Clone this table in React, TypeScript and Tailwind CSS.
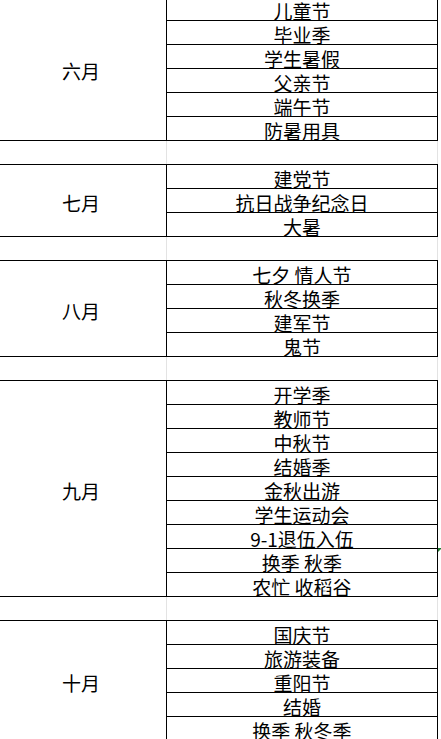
import React from 'react'

type Group = { month: string; items: string[] }

const groups: Group[] = [
  { month: '六月', items: ['儿童节', '毕业季', '学生暑假', '父亲节', '端午节', '防暑用具'] },
  { month: '七月', items: ['建党节', '抗日战争纪念日', '大暑'] },
  { month: '八月', items: ['七夕 情人节', '秋冬换季', '建军节', '鬼节'] },
  {
    month: '九月',
    items: ['开学季', '教师节', '中秋节', '结婚季', '金秋出游', '学生运动会', '9-1退伍入伍', '换季 秋季', '农忙 收稻谷'],
  },
  { month: '十月', items: ['国庆节', '旅游装备', '重阳节', '结婚', '换季 秋冬季'] },
]

const font = { fontFamily: '"Noto Sans CJK SC", "Noto Sans", sans-serif' }

function BlankRow() {
  return (
    <div className="flex h-[24px] border-b border-black">
      <div className="w-[166px]" />
      <div className="w-[272px] border-x border-[#e3e3e3]" />
    </div>
  )
}

function MonthGroup({ group }: { group: Group }) {
  return (
    <div className="flex">
      <div className="w-[166px] border-b border-black flex items-center justify-center pr-1 pt-[4px] text-[19px] leading-none text-black">
        {group.month}
      </div>
      <div className="w-[272px] border-x border-black">
        {group.items.map(item => (
          <div
            key={item}
            className="relative h-[24px] border-b border-black flex items-center justify-center pt-[4px] text-[19px] leading-none text-black"
          >
            {item}
            {item === '换季 秋季' && (
              <svg className="absolute -right-[5px] -top-[1px]" width="4" height="4" viewBox="0 0 4 4">
                <polygon points="0,0 4,0 0,4" fill="#1e7a2e" />
              </svg>
            )}
          </div>
        ))}
      </div>
    </div>
  )
}

export default function App() {
  return (
    <div className="w-[441px] h-[739px] overflow-hidden bg-white" style={font}>
      <div className="-mt-[3px] w-[438px]">
        {groups.map((g, i) => (
          <React.Fragment key={g.month}>
            <MonthGroup group={g} />
            {i < groups.length - 1 && <BlankRow />}
          </React.Fragment>
        ))}
      </div>
    </div>
  )
}
